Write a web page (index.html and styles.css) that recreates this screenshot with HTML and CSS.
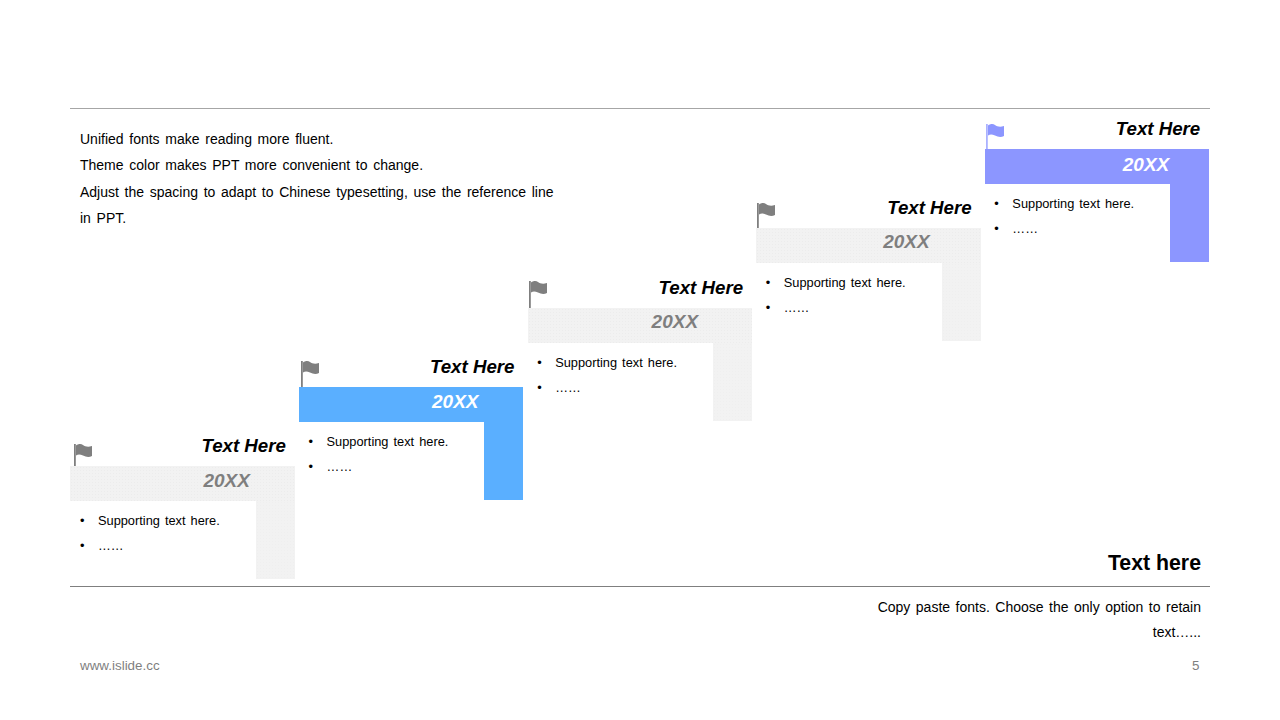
FILE: index.html
```html
<!DOCTYPE html>
<html lang="en">
<head>
<meta charset="utf-8">
<title>Timeline</title>
<link rel="stylesheet" href="styles.css">
</head>
<body>
<main class="slide">
  <section class="stage">
    <div class="intro">
      <p>Unified fonts make reading more fluent.</p>
      <p>Theme color makes PPT more convenient to change.</p>
      <p>Adjust the spacing to adapt to Chinese typesetting, use the reference line in PPT.</p>
    </div>
    <article class="step step-1 tone-gray">
      <header class="step-head">
        <svg class="flag" viewBox="0 0 22 23"><path class="pole" d="M1 1h1.800v22H1z"/><path class="cloth" d="M3 2.500c2-1.500 5-2 7-.5s5 2.500 9 1v10c-3 1.500-6 1-9-.5s-5-1.500-7 0z"/></svg>
        <h2>Text Here</h2>
      </header>
      <div class="bar"><span>20XX</span></div>
      <div class="body">
        <ul><li>Supporting text here.</li><li>……</li></ul>
        <div class="leg"></div>
      </div>
    </article>
    <article class="step step-2 tone-blue">
      <header class="step-head">
        <svg class="flag" viewBox="0 0 22 27"><path class="pole" d="M1 1h1.800v26H1z"/><path class="cloth" d="M3 2.500c2-1.500 5-2 7-.5s5 2.500 9 1v10c-3 1.500-6 1-9-.5s-5-1.500-7 0z"/></svg>
        <h2>Text Here</h2>
      </header>
      <div class="bar"><span>20XX</span></div>
      <div class="body">
        <ul><li>Supporting text here.</li><li>……</li></ul>
        <div class="leg"></div>
      </div>
    </article>
    <article class="step step-3 tone-gray">
      <header class="step-head">
        <svg class="flag" viewBox="0 0 22 28"><path class="pole" d="M1 1h1.800v27H1z"/><path class="cloth" d="M3 2.500c2-1.500 5-2 7-.5s5 2.500 9 1v10c-3 1.500-6 1-9-.5s-5-1.500-7 0z"/></svg>
        <h2>Text Here</h2>
      </header>
      <div class="bar"><span>20XX</span></div>
      <div class="body">
        <ul><li>Supporting text here.</li><li>……</li></ul>
        <div class="leg"></div>
      </div>
    </article>
    <article class="step step-4 tone-gray">
      <header class="step-head">
        <svg class="flag" viewBox="0 0 22 26"><path class="pole" d="M1 1h1.800v25H1z"/><path class="cloth" d="M3 2.500c2-1.500 5-2 7-.5s5 2.500 9 1v10c-3 1.500-6 1-9-.5s-5-1.500-7 0z"/></svg>
        <h2>Text Here</h2>
      </header>
      <div class="bar"><span>20XX</span></div>
      <div class="body">
        <ul><li>Supporting text here.</li><li>……</li></ul>
        <div class="leg"></div>
      </div>
    </article>
    <article class="step step-5 tone-violet">
      <header class="step-head">
        <svg class="flag" viewBox="0 0 22 26"><path class="pole" d="M1 1h1.800v25H1z"/><path class="cloth" d="M3 2.500c2-1.500 5-2 7-.5s5 2.500 9 1v10c-3 1.500-6 1-9-.5s-5-1.500-7 0z"/></svg>
        <h2>Text Here</h2>
      </header>
      <div class="bar"><span>20XX</span></div>
      <div class="body">
        <ul><li>Supporting text here.</li><li>……</li></ul>
        <div class="leg"></div>
      </div>
    </article>
  </section>
  <section class="summary">
    <h3>Text here</h3>
    <p>Copy paste fonts. Choose the only option to retain text…...</p>
  </section>
  <footer class="foot">
    <span>www.islide.cc</span>
    <span>5</span>
  </footer>
</main>
</body>
</html>
```
FILE: styles.css
```css
* { box-sizing: border-box; }
html, body { margin: 0; padding: 0; background: #fff; }
body { font-family: "Liberation Sans", Arial, sans-serif; color: #000; }
.slide {
  width: 1280px;
  height: 720px;
  padding: 108px 70px 0;
  overflow: hidden;
}
.stage {
  height: 479px;
  display: grid;
  grid-template-columns: repeat(5, 224.5px);
  column-gap: 4.1px;
  grid-template-rows: 1fr;
  padding-left: 0.4px;
  border-top: 1px solid #a6a6a6;
  border-bottom: 1px solid #7f7f7f;
}
.intro {
  grid-column: 1 / 3;
  grid-row: 1;
  width: 484px;
  margin: 17px 0 0 0;
  padding-left: 9.6px;
  font-size: 14px;
  line-height: 26.4px;
  word-spacing: 1.8px;
  align-self: start;
}
.intro p { margin: 0; }
.step {
  grid-row: 1;
  align-self: end;
}
.step-1 { grid-column: 1; margin-bottom: 7px; }
.step-2 { grid-column: 2; margin-bottom: 86px; }
.step-3 { grid-column: 3; margin-bottom: 165px; }
.step-4 { grid-column: 4; margin-bottom: 245px; }
.step-5 { grid-column: 5; margin-bottom: 324px; }
.step-head {
  height: 32px;
  display: flex;
  justify-content: space-between;
  align-items: flex-end;
  padding-right: 9px;
}
.flag { width: 22px; height: 26px; display: block; }
.step-1 .flag { height: 23px; margin-left: 3px; }
.step-2 .flag { height: 27px; margin-left: 1px; }
.step-3 .flag { height: 28px; }
.step-head h2 {
  margin: 0 0 9.5px;
  font-size: 18.7px;
  line-height: 22px;
  font-weight: bold;
  font-style: italic;
}
.bar {
  height: 35px;
  display: flex;
  justify-content: flex-end;
  align-items: center;
  padding-right: 45px;
  padding-bottom: 6px;
  font-size: 19px;
  font-weight: bold;
  font-style: italic;
}
.step-3 .bar { padding-right: 54px; padding-bottom: 8px; }
.step-4 .bar { padding-right: 51px; padding-bottom: 8px; }
.step-5 .bar { padding-right: 40px; padding-bottom: 4px; }
.body {
  height: 78px;
  display: flex;
  justify-content: space-between;
}
.body ul {
  margin: 0;
  padding: 8px 0 0 9.6px;
  list-style: none;
  font-size: 12.8px;
  line-height: 24.7px;
  word-spacing: 1.5px;
}
.body li::before {
  content: "•";
  display: inline-block;
  width: 18px;
}
.leg { width: 39px; }
.tone-gray .bar {
  background-color: #f2f2f2;
  background-image: radial-gradient(circle, #ececec 0.6px, transparent 0.9px);
  background-size: 3px 3px;
}
.tone-gray .leg {
  background-color: #f2f2f2;
  background-image: radial-gradient(circle, #efefef 0.6px, transparent 0.9px);
  background-size: 3px 3px;
}
.tone-gray .bar { color: #7f7f7f; }
.pole, .cloth { fill: #7f7f7f; }
.tone-blue .bar, .tone-blue .leg { background: #5aafff; color: #fff; }
.tone-violet .bar, .tone-violet .leg { background: #8c96ff; color: #fff; }
.tone-violet .cloth { fill: #8c96ff; }
.tone-violet .pole { fill: #aab1ff; }
.summary {
  margin-top: -36px;
  padding: 0 9px;
  text-align: right;
}
.summary h3 {
  margin: 0 0 19px;
  font-size: 21.3px;
  line-height: 25px;
  font-weight: bold;
}
.summary p {
  margin: 0 0 0 auto;
  width: 340px;
  font-size: 14px;
  line-height: 25px;
  word-spacing: 1.6px;
}
.foot {
  display: flex;
  justify-content: space-between;
  margin-top: 13px;
  padding: 0 10.5px 0 10px;
  font-size: 13.4px;
  line-height: 16px;
  color: #7f7f7f;
}
```
